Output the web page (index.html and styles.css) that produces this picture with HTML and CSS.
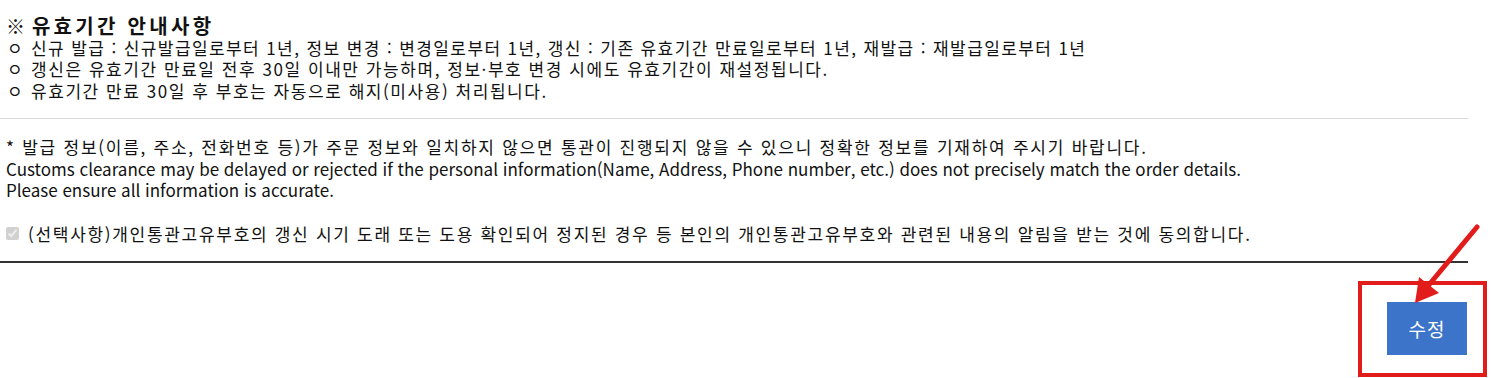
FILE: index.html
```html
<!DOCTYPE html>
<html lang="ko">
<head>
  <meta charset="UTF-8" />
  <title>개인통관고유부호 수정</title>
  <link rel="stylesheet" href="styles.css">
</head>
<body>

  <div class="wrap">
    <!-- 유효기간 안내 -->
    <div class="notice">
      <strong class="notice-title"><span class="notice-mark">※</span> 유효기간 안내사항</strong>
      <ul class="notice-list">
        <li>신규 발급 : 신규발급일로부터 1년, 정보 변경 : 변경일로부터 1년, 갱신 : 기존 유효기간 만료일로부터 1년, 재발급 : 재발급일로부터 1년</li>
        <li>갱신은 유효기간 만료일 전후 30일 이내만 가능하며, 정보·부호 변경 시에도 유효기간이 재설정됩니다.</li>
        <li>유효기간 만료 30일 후 부호는 자동으로 해지(미사용) 처리됩니다.</li>
      </ul>
    </div>

    <div class="info">
      <p>* 발급 정보(이름, 주소, 전화번호 등)가 주문 정보와 일치하지 않으면 통관이 진행되지 않을 수 있으니 정확한 정보를 기재하여 주시기 바랍니다.<br>
      <span class="en">Customs clearance may be delayed or rejected if the personal information(Name, Address, Phone number, etc.) does not precisely match the order details.<br>
      Please ensure all information is accurate.</span></p>

      <label class="agree">
        <input type="checkbox" checked disabled>
        <span>(선택사항)개인통관고유부호의 갱신 시기 도래 또는 도용 확인되어 정지된 경우 등 본인의 개인통관고유부호와 관련된 내용의 알림을 받는 것에 동의합니다.</span>
      </label>
    </div>

    <div class="actions">
      <button class="btn-edit" type="button">수정</button>
    </div>
  </div>

  <!-- 강조 표시 (빨간 박스 + 화살표) -->
  <div class="mark-box"></div>
  <svg class="mark-arrow" width="1491" height="378" viewBox="0 0 1491 378" aria-hidden="true">
    <line x1="1477" y1="227" x2="1428" y2="286" stroke="#e21b1b" stroke-width="5" stroke-linecap="round"/>
    <polygon points="1415,303 1419,277 1439,293" fill="#e21b1b"/>
  </svg>

</body>
</html>
```

FILE: styles.css
```css
body {
  font-family: "Noto Sans CJK KR", "Noto Sans", sans-serif;
  font-size: 17px;
  letter-spacing: 1.55px;
  margin: 0;
  background: #fff;
  color: #111;
}

.wrap {
  width: 1468px;
  padding-top: 15px;
}

/* 유효기간 안내 */
.notice {
  padding: 0 6px 16px;
  border-bottom: 1px solid #d9d9d9;
  line-height: 21.7px;
}

.notice-title {
  display: block;
  font-size: 20px;
  letter-spacing: 3.3px;
  font-weight: 700;
}

.notice-mark {
  display: inline-block;
  margin-right: -2px;
  font-size: 19px;
  letter-spacing: 0;
}

.notice-list {
  margin: 0;
  padding: 0;
  list-style: none;
}

.notice-list li:first-child {
  letter-spacing: 1.4px;
}

.notice-list li::before {
  content: "ㅇ";
  display: inline-block;
  width: 24px;
  padding-left: 1px;
  letter-spacing: 0;
}

/* 안내 문구 + 동의 */
.info {
  padding: 17px 6px 16px;
  border-bottom: 2px solid #333;
  line-height: 21.7px;
}

.info p {
  margin: 0 0 22px;
  letter-spacing: 1.75px;
}

.info .en {
  letter-spacing: 0;
}

.agree {
  display: flex;
  align-items: center;
  gap: 9px;
  letter-spacing: 1.7px;
}

.agree input {
  margin: 0;
  width: 13px;
  height: 13px;
}

/* 버튼 */
.actions {
  display: flex;
  justify-content: flex-end;
  padding-top: 39px;
}

.btn-edit {
  width: 80px;
  height: 53px;
  margin-right: 1px;
  background: #3b74c9;
  border: none;
  color: #fff;
  font-family: inherit;
  font-size: 19px;
  letter-spacing: 1px;
  cursor: pointer;
}

.mark-box {
  position: absolute;
  left: 1358px;
  top: 281px;
  width: 121px;
  height: 88px;
  border: 4px solid #e21b1b;
}

.mark-arrow {
  position: absolute;
  left: 0;
  top: 0;
  pointer-events: none;
}
```
